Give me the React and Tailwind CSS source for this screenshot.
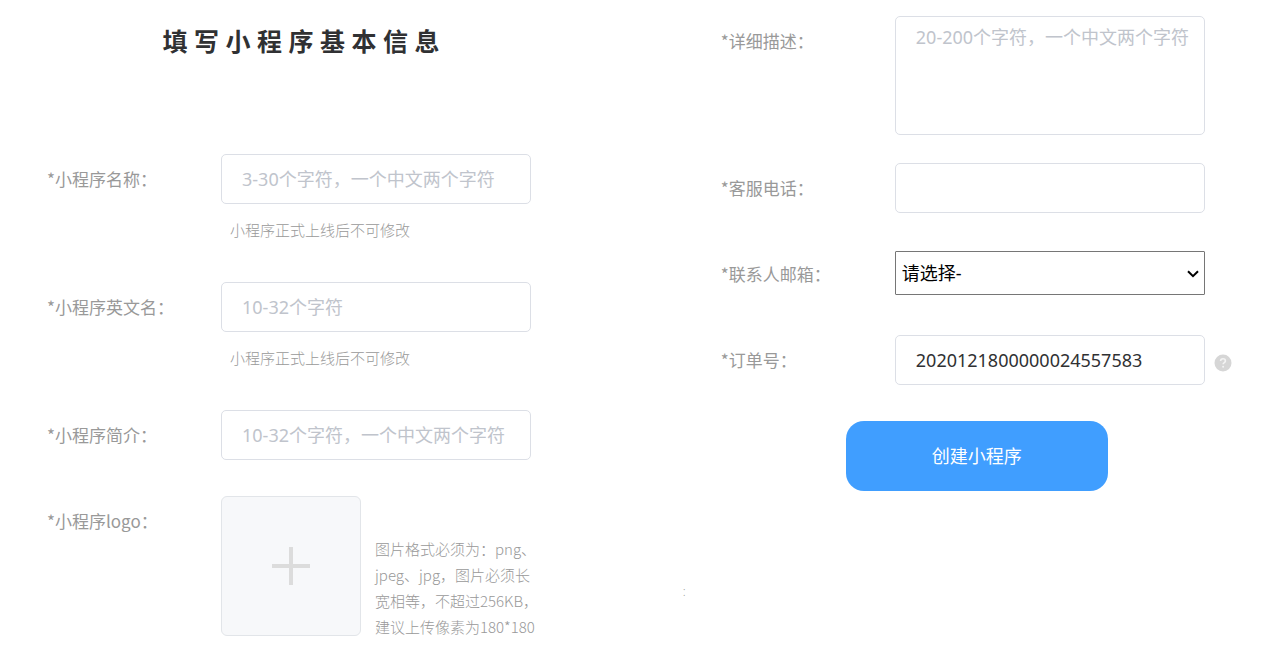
import { useState } from "react";

const inputClass =
  "w-[310px] rounded-[5px] border border-[#dcdfe6] bg-white pl-5 pr-2 text-lg text-[#303133] placeholder:text-[#c0c4cc] focus:border-[#409eff] focus:outline-none";

function FormRow({ id, label, hint, labelClass = "leading-[50px]", className, children }) {
  return (
    <div className={`flex items-start ${className || ""}`}>
      <label
        htmlFor={id}
        className={`w-[174px] shrink-0 font-['Noto_Sans_CJK_SC',sans-serif] text-[17px] text-[#999] ${labelClass}`}
      >
        *{label}：
      </label>
      <div>
        <div className="flex items-center">{children}</div>
        {hint && <p className="mt-3 pl-[9px] text-[15px] leading-7 font-light text-[#999]">{hint}</p>}
      </div>
    </div>
  );
}

function HelpIcon() {
  return (
    <svg viewBox="0 0 18 18" className="h-[18px] w-[18px]" aria-hidden="true">
      <circle cx="9" cy="9" r="8.5" fill="#d6d6d6" />
      <path
        d="M6.6 7.1c0-1.5 1-2.3 2.4-2.3s2.4.8 2.4 2.1c0 1.6-2.3 1.7-2.3 3.4"
        fill="none"
        stroke="#f4f4f4"
        strokeWidth="1.6"
      />
      <circle cx="9.1" cy="12.8" r="1" fill="#f4f4f4" />
    </svg>
  );
}

function App() {
  const [form, setForm] = useState({
    name: "",
    enName: "",
    intro: "",
    desc: "",
    phone: "",
    email: "",
    orderNo: "2020121800000024557583"
  });

  const update = (key) => (event) => setForm((prev) => ({ ...prev, [key]: event.target.value }));

  return (
    <form
      lang="zh-CN"
      onSubmit={(event) => event.preventDefault()}
      className="grid grid-cols-[11fr_38px_9fr] bg-white px-[47px] pt-4 font-['Noto_Sans','Noto_Sans_CJK_SC',sans-serif]"
    >
      <section>
        <h1 className="mb-[88px] w-[508px] text-center text-[25px] leading-[50px] font-bold text-[#303133]">
          填 写 小 程 序 基 本 信 息
        </h1>

        <FormRow id="name" label="小程序名称" hint="小程序正式上线后不可修改" className="mb-[38px]">
          <input
            id="name"
            type="text"
            value={form.name}
            onChange={update("name")}
            placeholder="3-30个字符，一个中文两个字符"
            className={`${inputClass} h-[50px]`}
          />
        </FormRow>

        <FormRow id="enName" label="小程序英文名" hint="小程序正式上线后不可修改" className="mb-[38px]">
          <input
            id="enName"
            type="text"
            value={form.enName}
            onChange={update("enName")}
            placeholder="10-32个字符"
            className={`${inputClass} h-[50px]`}
          />
        </FormRow>

        <FormRow id="intro" label="小程序简介" className="mb-9">
          <input
            id="intro"
            type="text"
            value={form.intro}
            onChange={update("intro")}
            placeholder="10-32个字符，一个中文两个字符"
            className={`${inputClass} h-[50px]`}
          />
        </FormRow>

        <FormRow id="logo" label="小程序logo">
          <label
            htmlFor="logo"
            className="flex h-[140px] w-[140px] shrink-0 cursor-pointer items-center justify-center self-start rounded-md border border-[#e2e5e9] bg-[#f7f8fa]"
          >
            <input id="logo" type="file" accept=".png,.jpeg,.jpg" aria-label="小程序logo" className="sr-only" />
            <svg viewBox="0 0 38 38" className="h-[38px] w-[38px]" aria-hidden="true">
              <path d="M19 0v38M0 19h38" stroke="#dcdcdc" strokeWidth="4" />
            </svg>
          </label>
          <p className="mt-10 ml-3.5 self-start font-['Noto_Sans_CJK_SC',sans-serif] text-[15px] leading-[26px] font-light whitespace-nowrap text-[#999]">
            图片格式必须为：png、
            <br />
            jpeg、jpg，图片必须长
            <br />
            宽相等，不超过256KB，
            <br />
            建议上传像素为180*180
          </p>
        </FormRow>
      </section>

      <span className="mb-9 self-end text-xs leading-6 font-light text-[#999]">:</span>

      <section>
        <FormRow id="desc" label="详细描述" className="mb-7">
          <textarea
            id="desc"
            value={form.desc}
            onChange={update("desc")}
            placeholder="20-200个字符，一个中文两个字符"
            className={`${inputClass} block h-[119px] resize-none py-1.5`}
          />
        </FormRow>

        <FormRow id="phone" label="客服电话" className="mb-[38px]">
          <input
            id="phone"
            type="tel"
            value={form.phone}
            onChange={update("phone")}
            className={`${inputClass} h-[50px]`}
          />
        </FormRow>

        <FormRow id="email" label="联系人邮箱" labelClass="leading-[46px]" className="mb-[38px]">
          <div className="relative">
            <select
              id="email"
              value={form.email}
              onChange={update("email")}
              className="block h-11 w-[310px] appearance-none rounded-[1px] border border-[#767676] bg-white px-1.5 text-lg text-black"
            >
              <option value="">请选择-</option>
            </select>
            <svg
              viewBox="0 0 12 8"
              className="pointer-events-none absolute top-[19px] right-1.5 h-2 w-3"
              aria-hidden="true"
            >
              <path d="M1 1.2l5 5 5-5" fill="none" stroke="#000" strokeWidth="2" />
            </svg>
          </div>
        </FormRow>

        <FormRow id="orderNo" label="订单号" className="mb-9">
          <input
            id="orderNo"
            type="text"
            value={form.orderNo}
            onChange={update("orderNo")}
            className={`${inputClass} h-[50px]`}
          />
          <button type="button" aria-label="订单号说明" className="mt-1.5 ml-[9px] cursor-pointer">
            <HelpIcon />
          </button>
        </FormRow>

        <button
          type="submit"
          className="ml-[125px] block h-[70px] w-[262px] cursor-pointer rounded-[18px] bg-[#409eff] text-lg text-white"
        >
          创建小程序
        </button>
      </section>
    </form>
  );
}

export default App;
